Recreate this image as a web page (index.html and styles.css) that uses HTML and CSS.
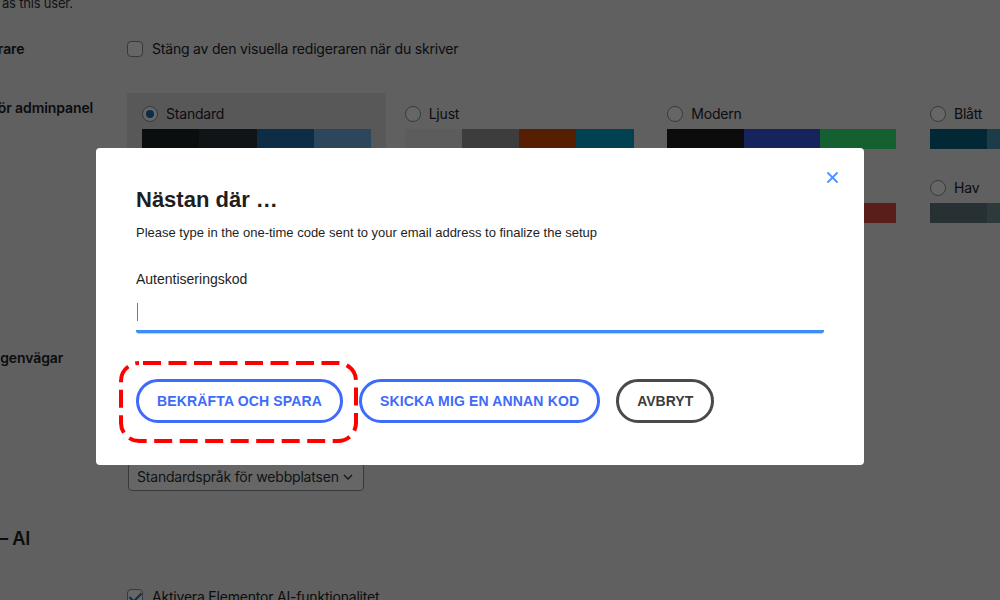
FILE: index.html
```html
<!DOCTYPE html>
<html lang="sv">
<head>
<meta charset="utf-8">
<title>Profil</title>
<link rel="stylesheet" href="styles.css">
</head>
<body>
<div class="wp-wrap">
  <p class="intro">as this user.</p>

  <div class="form-row row-editor">
    <div class="th">Visuell redigerare</div>
    <div class="td"><label class="check"><input type="checkbox" class="cb">Stäng av den visuella redigeraren när du skriver</label></div>
  </div>

  <div class="form-row row-colors">
    <div class="th">Färgschema för adminpanel</div>
    <div class="td">
      <div class="color-grid">
        <div class="color-option selected">
          <label class="opt-label"><input type="radio" name="scheme" class="rb" checked>Standard</label>
          <div class="palette"><span style="background:#1d2327"></span><span style="background:#2c3338"></span><span style="background:#2271b1"></span><span style="background:#72aee6"></span></div>
        </div>
        <div class="color-option">
          <label class="opt-label"><input type="radio" name="scheme" class="rb">Ljust</label>
          <div class="palette"><span style="background:#e5e5e5"></span><span style="background:#999999"></span><span style="background:#d64e07"></span><span style="background:#04a4cc"></span></div>
        </div>
        <div class="color-option">
          <label class="opt-label"><input type="radio" name="scheme" class="rb">Modern</label>
          <div class="palette"><span style="background:#1e1e1e"></span><span style="background:#3858e9"></span><span style="background:#33f078"></span></div>
        </div>
        <div class="color-option">
          <label class="opt-label"><input type="radio" name="scheme" class="rb">Blått</label>
          <div class="palette"><span style="background:#096484"></span><span style="background:#4796b3"></span><span style="background:#52accc"></span><span style="background:#74b6ce"></span></div>
        </div>
        <div class="color-option">
          <label class="opt-label"><input type="radio" name="scheme" class="rb">Kaffe</label>
          <div class="palette"><span style="background:#46403c"></span><span style="background:#59524c"></span><span style="background:#c7a589"></span><span style="background:#9ea476"></span></div>
        </div>
        <div class="color-option">
          <label class="opt-label"><input type="radio" name="scheme" class="rb">Ektoplasma</label>
          <div class="palette"><span style="background:#413256"></span><span style="background:#523f6d"></span><span style="background:#a3b745"></span><span style="background:#d46f15"></span></div>
        </div>
        <div class="color-option">
          <label class="opt-label"><input type="radio" name="scheme" class="rb">Midnatt</label>
          <div class="palette"><span style="background:#25282b"></span><span style="background:#363b3f"></span><span style="background:#69a8bb"></span><span style="background:#e14d43"></span></div>
        </div>
        <div class="color-option">
          <label class="opt-label"><input type="radio" name="scheme" class="rb">Hav</label>
          <div class="palette"><span style="background:#627c83"></span><span style="background:#738e96"></span><span style="background:#9ebaa0"></span><span style="background:#aa9d88"></span></div>
        </div>
        <div class="color-option">
          <label class="opt-label"><input type="radio" name="scheme" class="rb">Soluppgång</label>
          <div class="palette"><span style="background:#b43c38"></span><span style="background:#cf4944"></span><span style="background:#dd823b"></span><span style="background:#ccaf0b"></span></div>
        </div>
      </div>
    </div>
  </div>

  <div class="form-row row-keys">
    <div class="th">Tangentbordsgenvägar</div>
    <div class="td"><label class="check"><input type="checkbox" class="cb">Aktivera kortkommandon för kommentarsmoderering.</label></div>
  </div>

  <div class="form-row row-toolbar">
    <div class="th">Verktygsfält</div>
    <div class="td"><label class="check"><input type="checkbox" class="cb" checked>Visa verktygsfältet när webbplatsen visas</label></div>
  </div>

  <div class="form-row row-lang">
    <div class="th">Språk</div>
    <div class="td">
      <div class="select"><span>Standardspråk för webbplatsen</span>
        <svg class="chev" width="10" height="6" viewBox="0 0 10 6"><path d="M1 1l4 4 4-4" fill="none" stroke="#2c3338" stroke-width="1.3"/></svg>
      </div>
    </div>
  </div>

  <h2 class="section-title">Elementor – AI</h2>

  <div class="form-row row-ai">
    <div class="th">Status</div>
    <div class="td"><label class="check"><input type="checkbox" class="cb" checked>Aktivera Elementor AI-funktionalitet</label></div>
  </div>
</div>

<div class="overlay"></div>

<div class="modal" role="dialog" aria-labelledby="modal-title">
  <button class="modal-close" aria-label="Stäng">
    <svg width="11" height="11" viewBox="0 0 11 11"><path d="M1 1L10 10M10 1L1 10" stroke="#4d93ff" stroke-width="1.8" stroke-linecap="round"/></svg>
  </button>
  <h2 class="modal-title" id="modal-title">Nästan där …</h2>
  <p class="modal-text">Please type in the one-time code sent to your email address to finalize the setup</p>
  <label class="field-label" for="code">Autentiseringskod</label>
  <div class="field">
    <input id="code" class="code-input" type="text">
    <span class="caret"></span>
  </div>
  <div class="actions">
    <div class="highlight">
      <button class="btn btn-primary">BEKRÄFTA OCH SPARA</button>
      <svg class="dash" width="239" height="82" viewBox="0 0 239 82"><rect x="2" y="2" width="235" height="78" rx="18" ry="18" fill="none" stroke="#ff0000" stroke-width="4" stroke-dasharray="18 7.5" stroke-dashoffset="-4"/></svg>
    </div>
    <button class="btn btn-primary">SKICKA MIG EN ANNAN KOD</button>
    <button class="btn btn-cancel">AVBRYT</button>
  </div>
</div>
</body>
</html>
```
FILE: styles.css
```css
* { box-sizing: border-box; }
html, body { margin: 0; height: 100%; }
body {
  background: #f0f0f1;
  font-family: Inter, "Noto Sans", sans-serif;
  font-size: 14px;
  letter-spacing: -0.2px;
  color: #1d2327;
  overflow: hidden;
  position: relative;
}

.wp-wrap { margin-left: -93px; width: 1300px; }

.intro {
  margin: -7px 0 0 95px;
  line-height: 20px;
  font-size: 13px;
  color: #2c3338;
}

.form-row {
  display: grid;
  grid-template-columns: 220px 1fr;
  line-height: 20px;
}
.th { font-weight: 600; letter-spacing: -0.1px; }

.row-editor { padding: 26px 0 20px; }
.row-colors { padding-bottom: 19px; }
.row-colors .th { padding-top: 19px; }
.row-colors .td { padding-top: 14px; }
.row-keys { padding: 17px 0 23px; }
.row-toolbar { padding: 17px 0 23px; }
.row-lang { padding: 12px 0 15px; }
.row-lang .th { padding-top: 4px; }
.row-ai { padding-top: 22px; }

.check { display: flex; align-items: center; gap: 9px; }

.cb, .rb {
  appearance: none;
  -webkit-appearance: none;
  margin: 0;
  width: 16px;
  height: 16px;
  border: 1px solid #8c8f94;
  background: #fff;
  position: relative;
  flex: none;
}
.cb { border-radius: 4px; }
.cb:checked::before {
  content: "";
  position: absolute;
  left: 4px;
  top: 0px;
  width: 5px;
  height: 10px;
  border-right: 2.5px solid #2271b1;
  border-bottom: 2.5px solid #2271b1;
  transform: rotate(45deg);
}
.rb { border-radius: 50%; }
.rb:checked::before {
  content: "";
  position: absolute;
  left: 3px;
  top: 3px;
  width: 8px;
  height: 8px;
  border-radius: 50%;
  background: #2271b1;
}

.color-grid {
  display: grid;
  grid-template-columns: repeat(4, 259px);
  column-gap: 3.67px;
  row-gap: 3px;
}
.color-option {
  height: 71px;
  padding: 5px 15px 15px;
}
.color-option.selected { background: #dcdcde; }
.opt-label {
  height: 31px;
  display: flex;
  align-items: center;
  gap: 8px;
}
.palette { display: flex; height: 20px; }
.palette span { flex: 1; }

.select {
  margin-left: 1px;
  width: 236px;
  height: 28px;
  border: 1px solid #8c8f94;
  border-radius: 4px;
  background: #fff;
  padding: 0 10px 0 8px;
  display: flex;
  align-items: center;
  justify-content: space-between;
  color: #2c3338;
}

.section-title {
  margin: 18px 0 13px;
  font-size: 18.2px;
  line-height: 28px;
  font-weight: 600;
  color: #1d2327;
}

.overlay {
  position: fixed;
  inset: 0;
  background: rgba(0, 0, 0, 0.6);
}

.modal {
  position: absolute;
  left: 96px;
  top: 148px;
  width: 768px;
  height: 317px;
  background: #fff;
  border-radius: 4px;
  padding: 39px 40px 42px;
  font-family: "Liberation Sans", Arial, sans-serif;
  letter-spacing: 0;
  color: #1e1e1e;
}
.modal-close {
  position: absolute;
  right: 26px;
  top: 24px;
  width: 11px;
  height: 11px;
  padding: 0;
  border: 0;
  background: none;
  display: block;
}
.modal-close svg { display: block; }
.modal-title {
  margin: 0 0 11px;
  font-size: 22px;
  line-height: 26px;
  font-weight: 700;
}
.modal-text {
  margin: 0;
  font-size: 13px;
  line-height: 18px;
}
.field-label {
  display: block;
  margin-top: 28px;
  font-size: 14px;
  line-height: 18px;
}
.field {
  position: relative;
  height: 45px;
  border-bottom: 3px solid #3f8bf8;
  border-radius: 0 0 2px 2px;
  box-shadow: 0 2px 1px -1px rgba(63, 139, 248, 0.4);
}
.code-input {
  width: 100%;
  height: 100%;
  border: 0;
  padding: 0;
  outline: none;
  background: transparent;
  font: inherit;
}
.caret {
  position: absolute;
  left: 1px;
  top: 15px;
  width: 1px;
  height: 18px;
  background: #3f7ef0;
}

.actions {
  margin-top: 46px;
  display: flex;
  gap: 16px;
}
.highlight { position: relative; }
.dash {
  position: absolute;
  left: -17px;
  top: -18px;
  pointer-events: none;
}
.btn {
  height: 44px;
  padding: 0 18px;
  border-radius: 22px;
  background: #fff;
  font-family: "Liberation Sans", Arial, sans-serif;
  font-size: 14px;
  font-weight: 700;
  letter-spacing: 0.15px;
  display: block;
}
.btn-primary { border: 3px solid #3d6bfa; color: #3d6bfa; }
.btn-cancel { border: 3px solid #4a4a4a; color: #3c3c3c; letter-spacing: 0; }
```
